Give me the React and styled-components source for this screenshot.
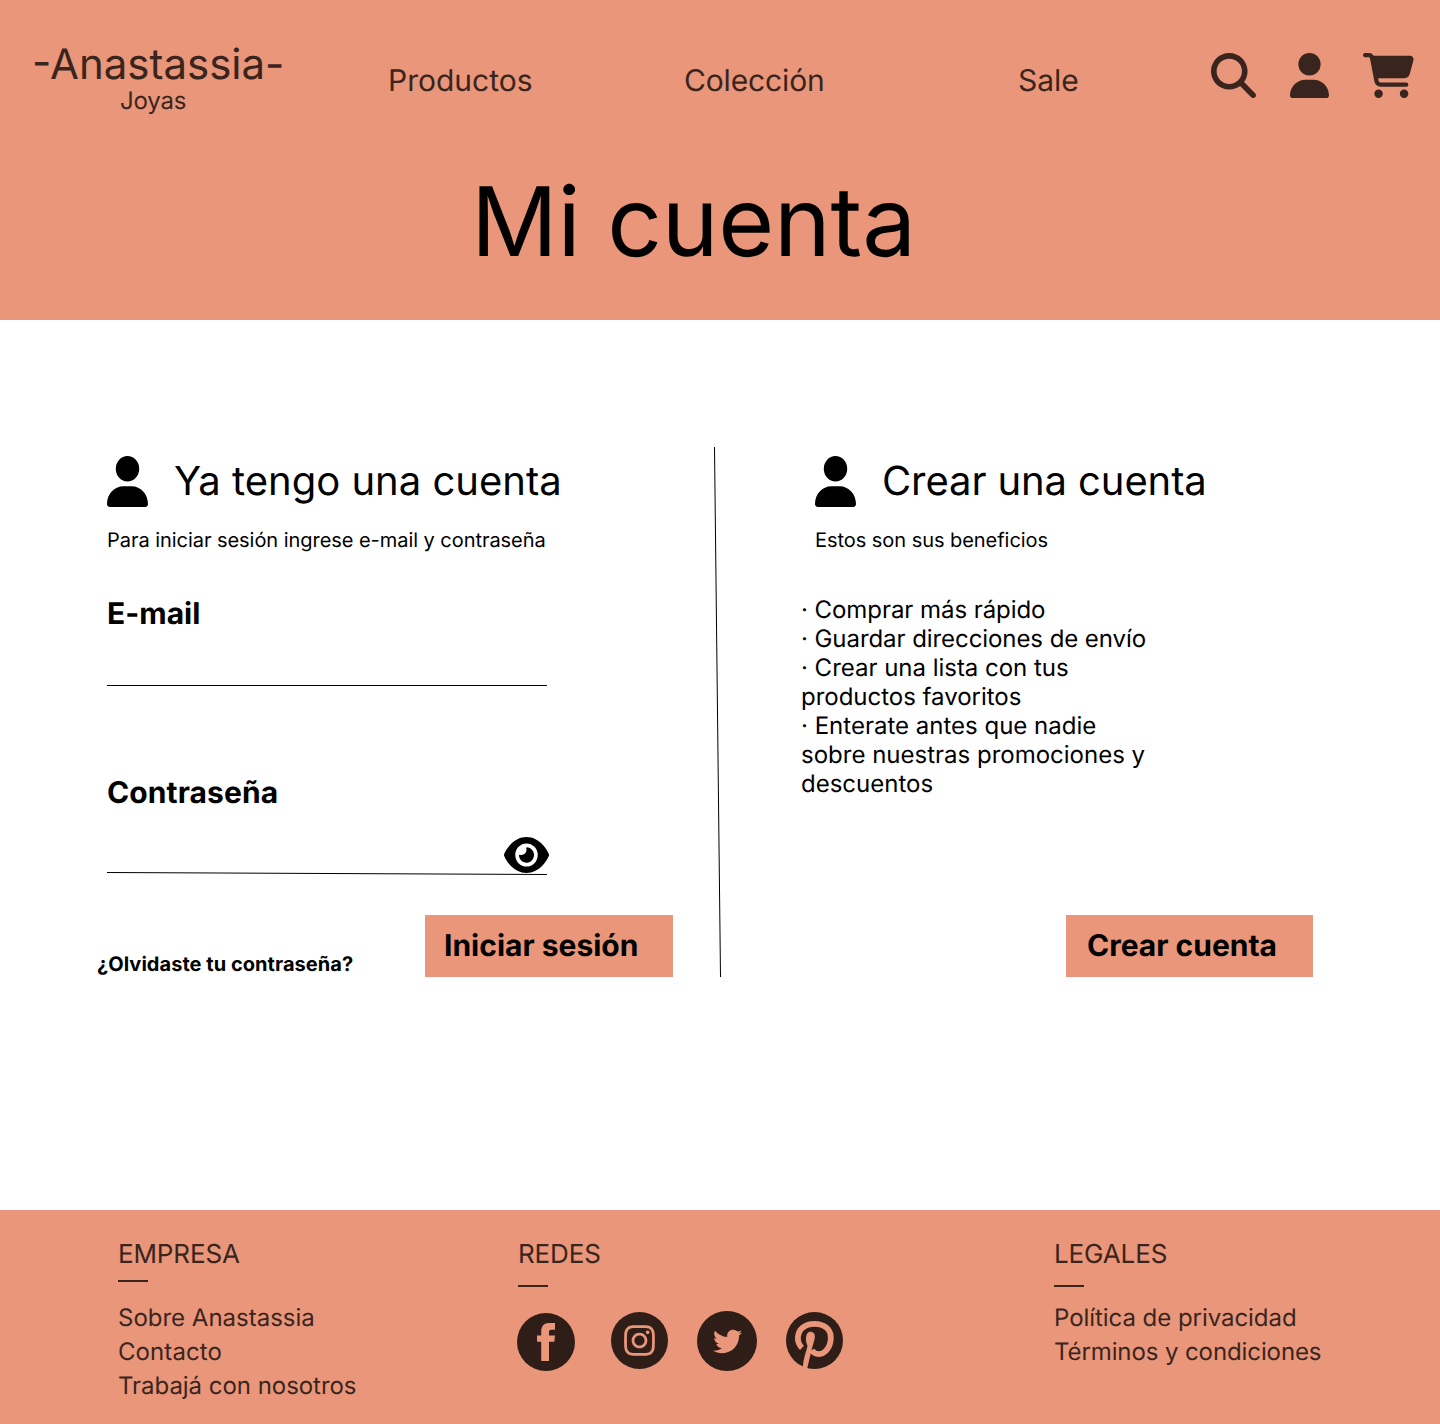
import React from "react";
import styled, { createGlobalStyle } from "styled-components";
import {
  FaUser,
  FaEye,
  FaMagnifyingGlass,
  FaCartShopping,
  FaInstagram,
  FaTwitter,
} from "react-icons/fa6";

const SALMON = "#e9967a";
const INK = "#3a251e";
const BADGE = "#2f1e18";

const GlobalStyle = createGlobalStyle`
  *, *::before, *::after { box-sizing: border-box; }
  body { margin: 0; background: #fff; }
  h1, h2, h3, p, ul { margin: 0; padding: 0; font-weight: 400; }
  ul { list-style: none; }
  a { color: inherit; text-decoration: none; }
  svg { display: block; flex: none; }
`;

const Page = styled.div`
  display: flex;
  flex-direction: column;
  width: 1440px;
  height: 1424px;
  font-family: Inter, "Liberation Sans", sans-serif;
  text-rendering: geometricPrecision;
  color: #000;
`;

const Header = styled.header`
  height: 320px;
  background: ${SALMON};
`;

const TopBar = styled.div`
  display: grid;
  grid-template-columns: 356px 296px 334px 193px auto;
  height: 164px;
  padding: 38px 0 0 32px;
  color: ${INK};
`;

const Brand = styled.a`
  display: flex;
  flex-direction: column;
  align-self: start;
  width: 252px;
`;

const BrandName = styled.span`
  padding-top: 4px;
  font-size: 42px;
  line-height: 46px;
  white-space: nowrap;
`;

const BrandTag = styled.span`
  margin: -2px 0 0 88px;
  font-size: 24px;
  line-height: 29px;
  letter-spacing: -0.2px;
`;

const NavLink = styled.a`
  padding-top: 25px;
  font-size: 30px;
  line-height: 36px;
  letter-spacing: ${(p) => p.$track || 0}px;
`;

const Actions = styled.div`
  display: flex;
  align-items: flex-start;
  gap: 34px;
  padding-top: 15px;
`;

const Title = styled.h1`
  padding-left: 471px;
  font-size: 96px;
  line-height: 116px;
  letter-spacing: -0.25px;
`;

const Main = styled.main`
  display: grid;
  grid-template-columns: 617px 87px 512px;
  height: 890px;
  padding: 127px 0 0 97px;
`;

const Column = styled.section`
  display: flex;
  flex-direction: column;
  width: ${(p) => p.$width}px;
  height: 530px;
  padding-top: 9px;
`;

const Heading = styled.div`
  display: flex;
  align-items: flex-start;
  gap: 26px;
  height: 72px;
  padding-left: ${(p) => p.$inset}px;
`;

const HeadingText = styled.h2`
  padding-top: 1px;
  font-size: 40px;
  line-height: 48px;
  letter-spacing: ${(p) => p.$track || 0}px;
  white-space: nowrap;
`;

const Intro = styled.p`
  padding-left: ${(p) => p.$inset}px;
  font-size: 20px;
  line-height: 24px;
  letter-spacing: -0.045px;
`;

const Field = styled.label`
  display: flex;
  flex-direction: column;
  width: 450px;
  margin-top: ${(p) => p.$top}px;
  padding-left: 10px;
`;

const FieldLabel = styled.span`
  font-size: 30px;
  font-weight: 700;
  line-height: 36px;
  letter-spacing: ${(p) => p.$track || 0}px;
`;

const Input = styled.input`
  flex: none;
  width: 440px;
  height: ${(p) => p.$height}px;
  padding: 0;
  border: 0;
  border-bottom: ${(p) => (p.$ruled ? "1px solid #000" : "0")};
  outline: none;
  background: transparent;
  font: 400 24px Inter, sans-serif;
`;

const PasswordRow = styled.div`
  display: flex;
  align-items: flex-end;
  height: 59px;
`;

const PasswordInput = styled(Input)`
  width: 397px;
`;

const EyeIcon = styled(FaEye)`
  width: 45px;
  height: 36px;
  margin-bottom: -3px;
`;

const FieldRule = styled.svg`
  margin-top: -1px;
`;

const Benefits = styled.ul`
  width: 351px;
  margin-top: 43px;
  font-size: 24px;
  line-height: 29px;
`;

const Benefit = styled.li`
  letter-spacing: ${(p) => p.$track || 0}px;
`;

const Footing = styled.div`
  display: flex;
  align-items: flex-end;
  justify-content: ${(p) => (p.$end ? "flex-end" : "space-between")};
  margin-top: auto;
`;

const Forgot = styled.a`
  padding-bottom: 1px;
  font-size: 20px;
  font-weight: 700;
  line-height: 24px;
  letter-spacing: 0.045px;
`;

const Button = styled.button`
  width: ${(p) => p.$width}px;
  height: 62px;
  padding: 0 0 0 ${(p) => p.$inset}px;
  border: 0;
  background: ${SALMON};
  color: #000;
  font: 700 30px/36px Inter, "Liberation Sans", sans-serif;
  text-rendering: inherit;
  text-align: left;
  white-space: nowrap;
`;

const Footer = styled.footer`
  display: grid;
  grid-template-columns: 400px 536px auto;
  height: 214px;
  padding: 29px 0 0 118px;
  background: ${SALMON};
  color: ${INK};
`;

const FooterTitle = styled.h3`
  font-size: 26px;
  line-height: 31px;
  letter-spacing: -0.12px;
`;

const Dash = styled.div`
  width: 30px;
  height: 2px;
  margin: ${(p) => p.$top}px 0 ${(p) => p.$bottom}px;
  background: ${INK};
`;

const FooterLink = styled.a`
  display: block;
  font-size: 24px;
  line-height: 34px;
  letter-spacing: ${(p) => p.$track || 0}px;
  white-space: nowrap;
`;

const Socials = styled.div`
  display: flex;
  align-items: flex-start;
  margin-left: -1px;
`;

const Badge = styled.a`
  display: flex;
  align-items: center;
  justify-content: center;
  width: ${(p) => p.$size}px;
  height: ${(p) => p.$size}px;
  margin: ${(p) => p.$drop}px ${(p) => p.$gap}px 0 0;
  border-radius: 50%;
  background: ${BADGE};
  color: ${SALMON};
`;

const HeaderUser = styled(FaUser)`
  width: 39px;
  height: 45px;
`;

const HeaderCart = styled(FaCartShopping)`
  width: 51px;
  height: 45px;
`;

const HeadingUser = styled(FaUser)`
  width: 41px;
  height: 51px;
`;

function AccountHeading({ inset, track, children }) {
  return (
    <Heading $inset={inset}>
      <HeadingUser preserveAspectRatio="none" />
      <HeadingText $track={track}>{children}</HeadingText>
    </Heading>
  );
}

function FacebookMark() {
  return (
    <svg width="18" height="38" viewBox="0 0 18 38" fill="currentColor">
      <path d="M4.2 38V18.8H0V12.6H4.2V8.6C4.2 3 7 0 12 0H18V6.8H14.4C12.6 6.8 12 7.5 12 9V12.6H18L17.3 18.8H12V38Z" />
    </svg>
  );
}

function PinterestMark() {
  return (
    <svg width="57" height="57" viewBox="0 0 57 57">
      <path
        d="M16 35.8C12.8 32.8 11.7 29.5 11.9 25.5C12.4 17 19 11.8 28.5 11.8C38.5 11.8 44.8 17.5 44.8 25.5C44.8 34.5 39.5 42.1 33 42.1C29.3 42.1 27 40.3 25.8 38"
        fill="none"
        stroke="currentColor"
        strokeWidth="5.8"
      />
      <path
        d="M24.3 19.8C27.5 19.8 29.3 22 28.8 25.5C28.3 29 26.5 34 25.3 39L21.2 56.4L16.8 55.6C17 48 19.8 41 21.5 34C20.3 31 19.8 28.5 20 26C20.2 22.5 21.8 19.8 24.3 19.8Z"
        fill="currentColor"
      />
    </svg>
  );
}

export default function App() {
  return (
    <Page>
      <GlobalStyle />
      <Header>
        <TopBar>
          <Brand>
            <BrandName>-Anastassia-</BrandName>
            <BrandTag>Joyas</BrandTag>
          </Brand>
          <NavLink>Productos</NavLink>
          <NavLink $track={-0.15}>Colección</NavLink>
          <NavLink>Sale</NavLink>
          <Actions>
            <FaMagnifyingGlass size={45} />
            <HeaderUser preserveAspectRatio="none" />
            <HeaderCart preserveAspectRatio="none" />
          </Actions>
        </TopBar>
        <Title>Mi cuenta</Title>
      </Header>

      <Main>
        <Column $width={576}>
          <AccountHeading inset={10}>Ya tengo una cuenta</AccountHeading>
          <Intro $inset={10}>Para iniciar sesión ingrese e-mail y contraseña</Intro>
          <Field $top={44}>
            <FieldLabel>E-mail</FieldLabel>
            <Input type="email" $height={54} $ruled />
          </Field>
          <Field $top={89}>
            <FieldLabel $track={0.1}>Contraseña</FieldLabel>
            <PasswordRow>
              <PasswordInput type="password" $height={58} />
              <EyeIcon viewBox="0 32 576 448" preserveAspectRatio="none" />
            </PasswordRow>
            <FieldRule width="440" height="6">
              <path d="M0 3.5L440 5.5" stroke="#000" />
            </FieldRule>
          </Field>
          <Footing>
            <Forgot>¿Olvidaste tu contraseña?</Forgot>
            <Button $width={248} $inset={19}>Iniciar sesión</Button>
          </Footing>
        </Column>

        <svg width="8" height="530">
          <path d="M0.5 0L6.5 530" stroke="#000" />
        </svg>

        <Column $width={512}>
          <AccountHeading inset={14} track={-0.1}>Crear una cuenta</AccountHeading>
          <Intro $inset={14}>Estos son sus beneficios</Intro>
          <Benefits>
            <Benefit $track={-0.06}>· Comprar más rápido</Benefit>
            <Benefit $track={-0.07}>· Guardar direcciones de envío</Benefit>
            <Benefit $track={-0.02}>· Crear una lista con tus productos favoritos</Benefit>
            <Benefit>· Enterate antes que nadie sobre nuestras promociones y descuentos</Benefit>
          </Benefits>
          <Footing $end>
            <Button $width={247} $inset={21}>Crear cuenta</Button>
          </Footing>
        </Column>
      </Main>

      <Footer>
        <div>
          <FooterTitle>EMPRESA</FooterTitle>
          <Dash $top={10} $bottom={19} />
          <FooterLink>Sobre Anastassia</FooterLink>
          <FooterLink $track={0.08}>Contacto</FooterLink>
          <FooterLink $track={-0.04}>Trabajá con nosotros</FooterLink>
        </div>
        <div>
          <FooterTitle>REDES</FooterTitle>
          <Dash $top={15} $bottom={24} />
          <Socials>
            <Badge $size={58} $gap={36} $drop={2}>
              <FacebookMark />
            </Badge>
            <Badge $size={57} $gap={29} $drop={1}>
              <FaInstagram size={35} />
            </Badge>
            <Badge $size={60} $gap={29} $drop={0}>
              <FaTwitter size={29} />
            </Badge>
            <Badge $size={57} $gap={0} $drop={1}>
              <PinterestMark />
            </Badge>
          </Socials>
        </div>
        <div>
          <FooterTitle>LEGALES</FooterTitle>
          <Dash $top={15} $bottom={14} />
          <FooterLink $track={-0.05}>Política de privacidad</FooterLink>
          <FooterLink $track={-0.1}>Términos y condiciones</FooterLink>
        </div>
      </Footer>
    </Page>
  );
}
